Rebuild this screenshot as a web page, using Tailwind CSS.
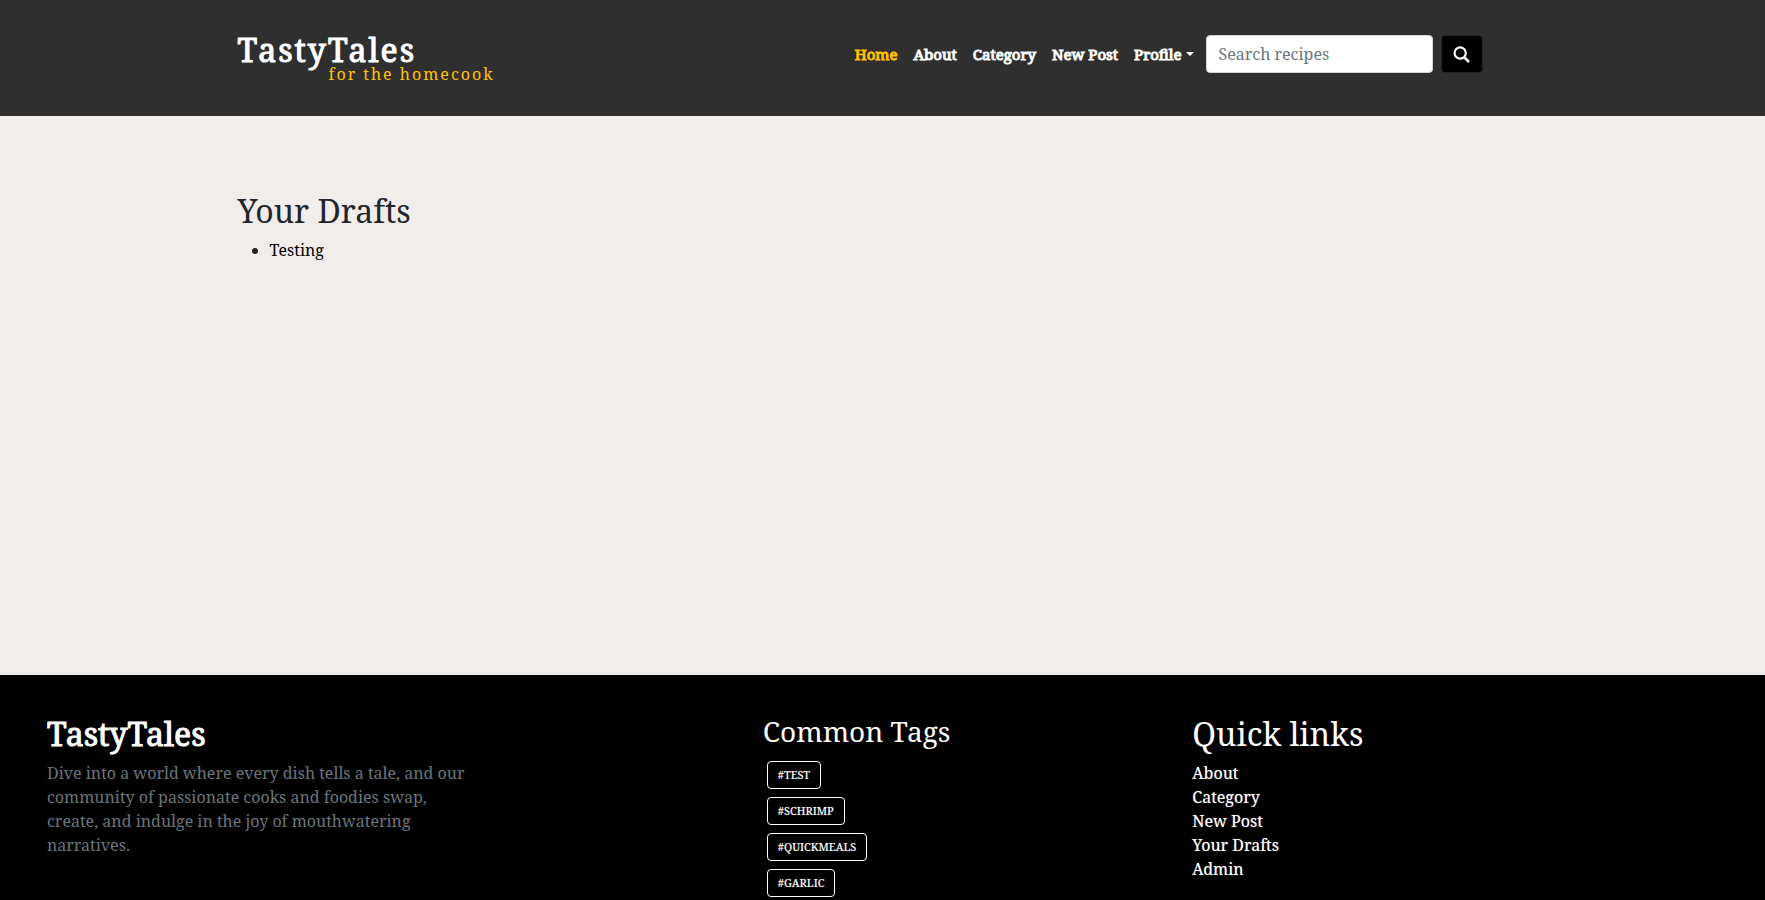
<!DOCTYPE html>
<html lang="en">
<head>
<meta charset="utf-8">
<meta name="viewport" content="width=device-width, initial-scale=1">
<title>TastyTales</title>
<script src="https://cdn.jsdelivr.net/npm/@tailwindcss/browser@4"></script>
</head>
<body class="flex min-h-screen flex-col bg-[#f1edea] font-['Noto_Serif','Droid_Serif','Liberation_Serif',serif] text-base text-[#212529]">
<header class="bg-[#2f2f2f]">
  <div class="mx-auto flex max-w-[1290px] items-start justify-between pt-8 pr-[45px] pb-[30px]">
    <a href="#" class="flex flex-col">
      <span class="text-[32px]/9 tracking-[2px] text-white [-webkit-text-stroke:1px] text-shadow-[0_0_1px_#ffffff80]">TastyTales</span>
      <span class="-mt-[6px] pl-[91px] text-base/6 tracking-[2px] text-[#ffc107]">for the homecook</span>
    </a>
    <div class="mt-[3px] flex items-center">
      <nav class="mr-3 flex items-center gap-4 text-[15px]/6 text-white [-webkit-text-stroke:1px]">
        <a href="#" class="text-[#ffc107]">Home</a>
        <a href="#">About</a>
        <a href="#">Category</a>
        <a href="#">New Post</a>
        <button type="button" class="flex items-center gap-1">Profile<span class="border-x-4 border-t-4 border-x-transparent border-t-white"></span></button>
      </nav>
      <form class="flex items-center gap-2">
        <input type="search" aria-label="Search recipes" placeholder="Search recipes" class="h-[38px] w-[227px] rounded border border-[#ced4da] bg-white px-3 placeholder:text-[#6c757d]">
        <button type="button" aria-label="Search" class="flex h-[38px] w-[42px] items-center justify-center rounded border border-[#212529] bg-black text-white">
          <svg class="size-[17px]" viewBox="0 0 17 17" fill="none" stroke="currentColor"><circle cx="7.200" cy="7" r="5.600" stroke-width="2.100"/><path d="M11 11l5 5" stroke-width="2.600"/></svg>
        </button>
      </form>
    </div>
  </div>
</header>
<main class="mx-auto min-h-[559px] w-full max-w-[1290px] pt-[76px]">
  <h1 class="mb-2 text-[32px]/[38px]">Your Drafts</h1>
  <ul class="list-disc pl-8">
    <li><a href="#" class="text-black">Testing</a></li>
  </ul>
</main>
<footer class="h-[225px] grow overflow-hidden bg-black pt-10 pl-[47px] text-white">
  <div class="grid grid-cols-12">
    <section class="col-span-5">
      <h2 class="mb-2 text-[32px]/[38px] [-webkit-text-stroke:1px]">TastyTales</h2>
      <p class="max-w-[430px] text-[#6c757d]">Dive into a world where every dish tells a tale, and our community of passionate cooks and foodies swap, create, and indulge in the joy of mouthwatering narratives.</p>
    </section>
    <section class="col-span-3">
      <h2 class="mb-[14px] text-[28px]/8">Common Tags</h2>
      <ul class="flex flex-col items-start gap-2 pl-1 text-[11px]/4 text-shadow-[0_0_1px_#ffffff80]">
        <li><a href="#" class="block rounded border border-white px-[10px] py-[5px]">#TEST</a></li>
        <li><a href="#" class="block rounded border border-white px-[10px] py-[5px]">#SCHRIMP</a></li>
        <li><a href="#" class="block rounded border border-white px-[10px] py-[5px]">#QUICKMEALS</a></li>
        <li><a href="#" class="block rounded border border-white px-[10px] py-[5px]">#GARLIC</a></li>
      </ul>
    </section>
    <section class="col-span-4">
      <h2 class="mb-2 text-[32px]/[38px]">Quick links</h2>
      <ul class="text-shadow-[0_0_1px_#ffffff80]">
        <li><a href="#">About</a></li>
        <li><a href="#">Category</a></li>
        <li><a href="#">New Post</a></li>
        <li><a href="#">Your Drafts</a></li>
        <li><a href="#">Admin</a></li>
      </ul>
    </section>
  </div>
</footer>
</body>
</html>
